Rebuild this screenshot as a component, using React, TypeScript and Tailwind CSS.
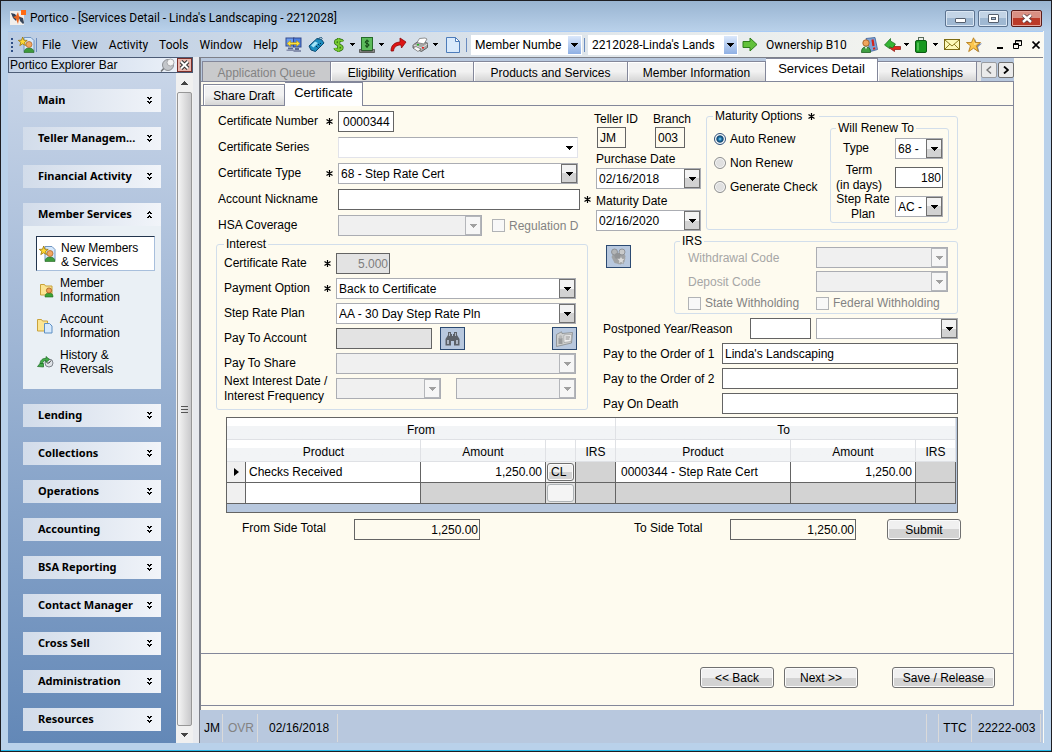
import { useState } from 'react';
import type { ReactNode } from 'react';
import clsx from 'clsx';

const SIDEBAR_TOP = ['Main', 'Teller Managem...', 'Financial Activity'];
const SIDEBAR_BOTTOM = [
  'Lending',
  'Collections',
  'Operations',
  'Accounting',
  'BSA Reporting',
  'Contact Manager',
  'Cross Sell',
  'Administration',
  'Resources',
];

const MAIN_TABS = [
  { label: 'Application Queue', width: 'w-[129px]', disabled: true },
  { label: 'Eligibility Verification', width: 'w-[143px]' },
  { label: 'Products and Services', width: 'w-[154px]' },
  { label: 'Member Information', width: 'w-[138px]' },
  { label: 'Services Detail', width: 'w-[112px]', active: true },
  { label: 'Relationships', width: 'w-[99px]' },
];

/* ---------- small glyphs ---------- */

function Caret({ className }: { className?: string }) {
  return (
    <svg viewBox="0 0 7 4" className={clsx('w-[7px] h-1 shrink-0', className)} fill="currentColor" shapeRendering="crispEdges">
      <path d="M0 0h7v1H0zM1 1h5v1H1zM2 2h3v1H2zM3 3h1v1H3z" />
    </svg>
  );
}

function BarCaret() {
  return (
    <svg viewBox="0 0 5 3" className="w-[5px] h-[3px] shrink-0" shapeRendering="crispEdges">
      <path d="M0 0h5v1H0zM1 1h3v1H1zM2 2h1v1H2z" />
    </svg>
  );
}

function Chevrons({ up }: { up?: boolean }) {
  return (
    <svg viewBox="0 0 5 7" className={clsx('w-[5px] h-[7px] mr-0.5 shrink-0', up && 'rotate-180')} shapeRendering="crispEdges">
      <path d="M0 0h2v1H0zM3 0h2v1H3zM1 1h3v1H1zM2 2h1v1H2zM0 4h2v1H0zM3 4h2v1H3zM1 5h3v1H1zM2 6h1v1H2z" />
    </svg>
  );
}

function Star() {
  return (
    <span className="w-[11px] shrink-0 flex justify-center" aria-label="required">
      <svg viewBox="0 0 7 7" className="size-[7px]" stroke="#000" strokeWidth="1.2">
        <path d="M3.5 0v7M.5 1.5l6 4M6.5 1.5l-6 4" />
      </svg>
    </span>
  );
}

/* ---------- icons ---------- */

function PorticoIcon() {
  return (
    <svg viewBox="0 0 16 16" className="size-4">
      <rect y="1" width="14" height="14" fill="#f1efec" />
      <path d="M1 3l4 1 2 3-1 4-3-3z" fill="#2f3f57" />
      <path d="M8 2l1 4 3 2-3 1-1 5-2-5-3-2 3-1z" fill="#e8641f" />
      <path d="M9 7l4 1 1 5-1 1-3-3z" fill="#38475c" />
      <rect x="11" width="5" height="5" fill="#ff6a13" />
    </svg>
  );
}

function PersonPageIcon() {
  return (
    <svg viewBox="0 0 17 17" className="size-[17px]">
      <path d="M6 1.5h7l3 3v11H6z" fill="#d6e8fb" stroke="#6f95c2" />
      <path d="M6 16.500c0-3 2-4.500 5-4.500s5 1.500 5 4.500z" fill="#3e9a3b" stroke="#22641f" strokeWidth=".6" />
      <circle cx="11" cy="8.500" r="3" fill="#f2a661" stroke="#a95e1f" strokeWidth=".7" />
      <path d="M4.700 1l1.200 3.200 3.300.2-2.600 2 .9 3.200-2.800-1.800-2.900 1.800 1-3.200L.3 4.400l3.200-.2z" fill="#ffd934" stroke="#9a7407" strokeWidth=".8" />
    </svg>
  );
}

function FolderPersonIcon() {
  return (
    <svg viewBox="0 0 16 16" className="size-4">
      <path d="M1.500 2.500h4l1 1.500h6.500v9h-11.500z" fill="#fbe592" stroke="#c9a23a" />
      <path d="M6 15c0-3 1.500-4 4-4s4 1 4 4z" fill="#3aa336" stroke="#1f6a1d" strokeWidth=".6" />
      <circle cx="10" cy="8.500" r="2.600" fill="#ee9f57" stroke="#9a4f17" strokeWidth=".7" />
    </svg>
  );
}

function FolderPageIcon() {
  return (
    <svg viewBox="0 0 16 16" className="size-4">
      <path d="M.5 1.500h4l1 1.500h5v10h-10z" fill="#fbe592" stroke="#c9a23a" />
      <path d="M7.500 5.500h5l2.500 2.500v7h-7.500z" fill="#d7eafc" stroke="#5d8fc4" />
    </svg>
  );
}

function HistoryIcon() {
  return (
    <svg viewBox="0 0 17 14" className="w-[17px] h-[14px]">
      <circle cx="12" cy="8" r="4" fill="#dfe3e8" stroke="#7f858c" />
      <path d="M12 8l2-2.500M12 8h-2" stroke="#444" fill="none" />
      <path d="M3 9c0-4 3-6 6-5.500V1.500l3.500 3-3.500 3v-2C7 5.500 5.500 7 5.500 9z" fill="#43ab48" stroke="#1d6a22" strokeWidth=".7" />
      <path d="M.5 11.500L3 8.500h3.500V12z" fill="#43ab48" stroke="#1d6a22" strokeWidth=".7" />
    </svg>
  );
}

function ScreensIcon() {
  return (
    <svg viewBox="0 0 17 16" className="w-[17px] h-4">
      <rect x="1" y="1" width="8" height="8" fill="#6b9cf0" stroke="#354a8c" />
      <rect x="8.500" y="1" width="7.500" height="9" fill="#4c7fe0" stroke="#354a8c" />
      <path d="M3 10.500h5v2H3z" fill="#5c6b90" />
      <path d="M1.500 12.500h8v1.500h-8z" fill="#8690ad" />
      <path d="M10 11h4v2h-4z" fill="#5c6b90" />
      <path d="M8.500 13h7.500v2H8.500z" fill="#8690ad" />
      <path d="M2 6.500l3.500-3v2h6v-2l3.500 3-3.500 3v-2h-6v2z" fill="#ffe23a" stroke="#a88500" strokeWidth=".5" />
    </svg>
  );
}

function PhoneIcon() {
  return (
    <svg viewBox="0 0 17 16" className="w-[17px] h-4">
      <path d="M1 9l8-7.500 4.500 1 2.500 3.500-8.500 8.500-4.500-1.500z" fill="#1c8dbf" stroke="#0b4a72" />
      <path d="M3 8.500l4-4 3 1.500-4.500 4.500z" fill="#a4e4f7" />
      <path d="M8 9l1 1M10 7l1 1M9.500 10.500l1 1M12 6l1 1M11.500 8.500l1 1" stroke="#062f4d" />
      <path d="M10 2.500l2.500-2.500 2 1.500" stroke="#0b4a72" fill="none" />
    </svg>
  );
}

function DollarIcon() {
  return (
    <svg viewBox="0 0 11 16" className="w-[11px] h-4" fill="none">
      <path d="M9.500 4.500c-.5-1.800-7-2.300-7 .7 0 2.800 6.500 2.500 6.500 5.500s-6.500 2.600-7 .3M5.700 1v14" stroke="#2c6c12" strokeWidth="3.200" />
      <path d="M9.500 4.500c-.5-1.800-7-2.300-7 .7 0 2.800 6.500 2.500 6.500 5.500s-6.500 2.600-7 .3M5.700 1.300v13.400" stroke="#79cc32" strokeWidth="1.800" />
    </svg>
  );
}

function CashIcon() {
  return (
    <svg viewBox="0 0 16 16" className="size-4">
      <rect x="2.500" y=".5" width="11" height="13" fill="#5cbb5b" stroke="#256b2a" />
      <path d="M10 4.500c-.8-1-3.800-1-3.800.7 0 1.800 3.800.8 3.800 2.800 0 1.800-3.200 1.700-4 .5M8 2.500v8.500" stroke="#0d3d10" fill="none" />
      <path d="M.5 12.500h2v1.500h11v-1.500h2v3H.5z" fill="#8a8a86" stroke="#3e3e3c" strokeWidth=".7" />
    </svg>
  );
}

function RedArrowIcon() {
  return (
    <svg viewBox="0 0 17 16" className="w-[17px] h-4">
      <path d="M1 14c0-5.500 3-8.500 9-9V1l6 4-4.500 6-.5-3c-4 0-7 1.500-7.500 6z" fill="#dd1414" stroke="#8e0808" strokeWidth=".8" />
    </svg>
  );
}

function PrinterIcon() {
  return (
    <svg viewBox="0 0 17 16" className="w-[17px] h-4">
      <path d="M1 8l5-3.500 9.500 1.500v4.500l-6 4-8.500-3.500z" fill="#a9a9a7" stroke="#4a4a4a" strokeWidth=".8" />
      <path d="M7.500 1.500l5.500-.5 2 1-3 5-7-1.500z" fill="#fff" stroke="#777" strokeWidth=".8" />
      <path d="M1.500 8l8 3 6-4" fill="none" stroke="#e4e4e4" />
      <path d="M1 11l3-1.500 5 2.500-3 2.500z" fill="#fafafa" stroke="#555" strokeWidth=".6" />
      <path d="M10 10h2v1.500h-2z" fill="#e22" />
      <path d="M5 7h2v1.500H5z" fill="#2b2" />
    </svg>
  );
}

function PageIcon() {
  return (
    <svg viewBox="0 0 14 16" className="w-[14px] h-4">
      <path d="M.5.5h9l4 4v11H.5z" fill="#d9eafc" stroke="#4d7cba" />
      <path d="M9.500.5v4h4z" fill="#fff" stroke="#4d7cba" />
    </svg>
  );
}

function GoIcon() {
  return (
    <svg viewBox="0 0 16 15" className="w-4 h-[15px]">
      <path d="M1 4.500h7V1l7 6.500L8 14v-3.500H1z" fill="#62c13a" stroke="#2f7d1b" />
    </svg>
  );
}

function PeopleIcon() {
  return (
    <svg viewBox="0 0 17 16" className="w-[17px] h-4">
      <path d="M5 1.500l9-1 2.500 12-7 2z" fill="#7fa3d6" stroke="#3c5f96" strokeWidth=".8" />
      <path d="M11.500 2.500l1 6.500M13 10.500l.3 2" stroke="#d3241c" strokeWidth="2.200" />
      <circle cx="5" cy="6" r="3.200" fill="#f0a55c" stroke="#9c5519" strokeWidth=".8" />
      <path d="M.5 15.500c0-4 1.500-5.500 4.500-5.500s4.500 1.500 4.500 5.500z" fill="#3f9f42" stroke="#1f5f22" strokeWidth=".8" />
      <path d="M4 10l1 2.500L6 10z" fill="#fff" />
    </svg>
  );
}

function SwapIcon() {
  return (
    <svg viewBox="0 0 17 14" className="w-[17px] h-[14px]">
      <path d="M16.500 8.500h-6v-2l-5 3.500 5 3.500v-2h6z" fill="#e02a1e" stroke="#8d130b" strokeWidth=".7" />
      <path d="M.5 7l6-6.500v2.500l5 3-3 4-3-1.500v2z" fill="#35b534" stroke="#17691a" strokeWidth=".7" />
    </svg>
  );
}

function BagIcon() {
  return (
    <svg viewBox="0 0 12 16" className="w-3 h-4">
      <rect x="3.500" y=".5" width="5" height="3.500" fill="#e9efe9" stroke="#5a6b5a" />
      <rect x=".5" y="3.500" width="11" height="12" rx="1.500" fill="#17981f" stroke="#0b5a12" />
      <path d="M2 5.500h2v8H2z" fill="#4cc04f" />
    </svg>
  );
}

function MailIcon() {
  return (
    <svg viewBox="0 0 16 11" className="w-4 h-[11px]">
      <rect x=".5" y=".5" width="15" height="10" fill="#fdf9b8" stroke="#7c6c14" />
      <path d="M1 1l7 6 7-6M1 10l5-5M15 10l-5-5" fill="none" stroke="#8f7f22" />
    </svg>
  );
}

function FavoriteIcon() {
  return (
    <svg viewBox="0 0 16 16" className="size-4">
      <path d="M9 2l2 4.500h5l-4 3.500 1.500 5.500-5-3.500z" fill="#7d8db0" />
      <path d="M7.500.8l2 4.700h5l-4 3.300 1.800 5.700-4.800-3.300-4.800 3.300 1.800-5.700L.5 5.500h5z" fill="#fbc64e" stroke="#b77e1c" strokeWidth=".9" />
      <path d="M7.500 3l1 3.500h3L8.500 8z" fill="#fff3c4" />
    </svg>
  );
}

function BinocularsIcon() {
  return (
    <svg viewBox="0 0 15 14" className="w-[15px] h-[14px]" fill="#5c6168">
      <path d="M3 0h3v2h1v2h1V2h1V0h3v3l2.500 4v6.500H9V9H6v4.500H.5V7L3 3z" />
      <path d="M4 1h1v3H4zM10 1h1v3h-1zM2 8h2v4H2zM11 8h2v4h-2z" fill="#aeb6c2" />
    </svg>
  );
}

function CardIcon() {
  return (
    <svg viewBox="0 0 17 16" className="w-[17px] h-4">
      <path d="M.5 3.500L5.500.8 6 2.500l10.500-1-1 10.500L.5 15.500z" fill="#cfd0cf" stroke="#878a8c" strokeWidth=".8" />
      <rect x="2.500" y="7" width="4" height="6" fill="#9a9c9d" />
      <circle cx="4.500" cy="6" r="1.800" fill="#b7b8b8" />
      <path d="M8 4l7.500-.5-.5 7-7 1z" fill="#efefef" stroke="#919497" strokeWidth=".6" />
      <path d="M9.500 6h4.500M9.500 8h4" stroke="#888" />
    </svg>
  );
}

function GroupIcon() {
  return (
    <svg viewBox="0 0 17 17" className="size-[17px]">
      <path d="M1.500 9l2-4h10l2 3-1 6-4 2.500-6-1.500z" fill="#a1a3a4" />
      <circle cx="4.500" cy="4" r="3" fill="#b3b5b6" stroke="#85888b" strokeWidth=".8" />
      <circle cx="12" cy="4" r="3" fill="#c9caca" stroke="#85888b" strokeWidth=".8" />
      <circle cx="7.500" cy="8" r="3" fill="#929496" />
      <path d="M11 8l1.200 2.500 3 .3-2.200 2 .5 3-2.500-1.500L8.500 16l.5-3.200-2.200-2 3-.3z" fill="#dcdcdb" stroke="#9a9c9e" strokeWidth=".6" />
    </svg>
  );
}

/* ---------- form controls ---------- */

type TextBoxProps = {
  id: string;
  value?: string;
  width: string;
  right?: boolean;
  disabled?: boolean;
  plain?: boolean;
};

function TextBox({ id, value = '', width, right, disabled, plain }: TextBoxProps) {
  return (
    <input
      id={id}
      type="text"
      defaultValue={value}
      disabled={disabled}
      className={clsx(
        'h-[21px] border border-[#646464] text-xs leading-4 rounded-none outline-none shrink-0',
        width,
        right ? 'text-right px-px' : 'px-0.5',
        disabled ? 'bg-[#e3e3e3] text-[#7d7d7d]' : plain ? 'bg-transparent' : 'bg-white',
      )}
    />
  );
}

type ComboProps = {
  id: string;
  value?: string;
  width: string;
  disabled?: boolean;
  flat?: boolean;
  label?: string;
};

function Combo({ id, value = '', width, disabled, flat, label }: ComboProps) {
  return (
    <span className={clsx('relative flex h-[21px] shrink-0', width)}>
      <select
        id={id}
        disabled={disabled}
        aria-label={label}
        className={clsx(
          'appearance-none w-full border text-xs leading-4 pl-0.5 pr-[18px] rounded-none outline-none opacity-100',
          flat ? 'border-[#e2e3ea] border-t-[#abadb3]' : 'border-[#abadb3]',
          disabled ? 'bg-[#f0f0f0]' : 'bg-white',
        )}
      >
        <option>{value}</option>
      </select>
      <span
        className={clsx(
          'absolute right-px top-px bottom-px w-4 flex items-center justify-center pointer-events-none',
          flat && 'text-black',
          !flat && !disabled && 'border border-[#707070] bg-gradient-to-b from-[#f3f3f3] from-50% to-[#d2d2d2] to-50% text-black',
          disabled && 'border border-[#b4b6ba] bg-[#f6f6f6] text-[#a0a0a0]',
        )}
      >
        <Caret />
      </span>
    </span>
  );
}

type FieldProps = {
  id: string;
  label: ReactNode;
  required?: boolean;
  labelWidth: string;
  children: ReactNode;
};

function Field({ id, label, required, labelWidth, children }: FieldProps) {
  return (
    <div className="flex items-center h-[21px]">
      <label htmlFor={id} className={clsx('shrink-0 leading-[15px] whitespace-nowrap', labelWidth)}>
        {label}
      </label>
      {required ? <span className="-ml-[3px] mr-[3px]"><Star /></span> : <span className="w-[11px] shrink-0" />}
      {children}
    </div>
  );
}

function GroupBox({ title, className, children }: { title: ReactNode; className?: string; children: ReactNode }) {
  return (
    <fieldset className={clsx('border border-[#d2deeb] rounded-[3px] min-w-0', className)}>
      <legend className="px-0.5 h-3.5 leading-[14px] flex items-center">{title}</legend>
      {children}
    </fieldset>
  );
}

function Check({ id, label }: { id: string; label: string }) {
  return (
    <span className="flex items-center gap-1 text-[#838383]">
      <input id={id} type="checkbox" disabled className="appearance-none size-[13px] border border-[#b1b3b6] bg-[#f8f8f8] shrink-0" />
      <label htmlFor={id} className="whitespace-nowrap">{label}</label>
    </span>
  );
}

function PushButton({ children, className }: { children: ReactNode; className?: string }) {
  return (
    <button
      type="button"
      className={clsx(
        'border border-[#707070] rounded-[3px] text-xs shadow-[inset_0_0_0_1px_#fbfbfb] bg-gradient-to-b from-[#f0f0f0] from-50% to-[#d3d3d3] to-50%',
        className,
      )}
    >
      {children}
    </button>
  );
}

function ToolButton({ label, children }: { label: string; children: ReactNode }) {
  return (
    <button type="button" aria-label={label} className="w-[25px] h-[23px] border border-[#2c4a72] bg-[#b8c8de] flex items-center justify-center shrink-0">
      {children}
    </button>
  );
}

/* ---------- window chrome ---------- */

function TitleBar() {
  const box = 'h-[17px] border rounded-[2px] bg-gradient-to-b from-50% to-50% flex justify-center';
  const plain = 'w-[30px] border-[#5c7390] shadow-[inset_0_0_0_1px_#dbe7f4] from-[#c3d4e6] to-[#9fb8d2]';
  return (
    <header className="h-[30px] shrink-0 flex items-center px-[9px] pt-1 bg-gradient-to-b from-[#99b4d1] to-[#b9d1ea]">
      <PorticoIcon />
      <h1 className="pl-1 text-xs font-['Roboto',sans-serif] whitespace-nowrap flex-1">
        Portico - [Services Detail - Linda's Landscaping - 2212028]
      </h1>
      <div className="flex gap-[3px]">
        <button type="button" aria-label="Minimize" className={clsx(box, plain, 'items-end pb-[3px]')}>
          <span className="w-[11px] h-[5px] border border-[#555f6e] bg-white rounded-[1px]" />
        </button>
        <button type="button" aria-label="Maximize" className={clsx(box, plain, 'items-center')}>
          <span className="w-[11px] h-[9px] border border-[#555f6e] bg-white rounded-[1px] flex items-center justify-center">
            <span className="w-[5px] h-[3px] border border-[#555f6e] bg-[#a9bfd7]" />
          </span>
        </button>
        <button
          type="button"
          aria-label="Close"
          className={clsx(box, 'w-[31px] items-center border-[#5a1c19] shadow-[inset_0_0_0_1px_#e5a59b] from-[#d98f83] to-[#bb3a28]')}
        >
          <svg viewBox="0 0 12 9" className="w-3 h-[9px]">
            <path d="M2 1l8 7M10 1L2 8" stroke="#5b3a3e" strokeWidth="4" />
            <path d="M2 1l8 7M10 1L2 8" stroke="#fff" strokeWidth="2.4" />
          </svg>
        </button>
      </div>
    </header>
  );
}

function BarSelect({ label, value, width }: { label: string; value: string; width: string }) {
  return (
    <span className={clsx('relative flex h-[20px] shrink-0 bg-white', width)}>
      <select aria-label={label} className="appearance-none w-full pl-1 pr-[18px] text-xs outline-none">
        <option>{value}</option>
      </select>
      <span className="absolute right-px top-px bottom-px w-[13px] bg-gradient-to-b from-[#dbe8fb] to-[#8fb0e4] flex items-center justify-center pointer-events-none">
        <Caret />
      </span>
    </span>
  );
}

function MenuBar() {
  const icon = 'shrink-0 flex items-center';
  return (
    <div className="h-[26px] shrink-0 flex items-center text-xs font-['Roboto',sans-serif] bg-gradient-to-r from-[#bccde3] to-[#fcfaf1] border-t border-[#a9cbf5]">
      <span className="ml-[3px] w-0.5 h-[14px] border-l-2 border-dotted border-[#2f4f86] shrink-0" />
      <span className="ml-[5px] shrink-0"><PersonPageIcon /></span>
      <span className="w-px h-[14px] ml-px bg-[#6a8cc0] shrink-0" />
      <nav className="flex gap-[11px] pl-[5px] w-[248px] shrink-0">
        {['File', 'View', 'Activity', 'Tools', 'Window', 'Help'].map((m) => (
          <button key={m} type="button">{m}</button>
        ))}
      </nav>
      <button type="button" aria-label="Screens" className={icon}><ScreensIcon /></button>
      <button type="button" aria-label="Phone" className={clsx(icon, 'ml-[6px]')}><PhoneIcon /></button>
      <button type="button" aria-label="Money" className={clsx(icon, 'ml-2 gap-[6px]')}><DollarIcon /><BarCaret /></button>
      <button type="button" aria-label="Cash" className={clsx(icon, 'ml-1 gap-1')}><CashIcon /><BarCaret /></button>
      <button type="button" aria-label="Forward" className={clsx(icon, 'ml-[6px]')}><RedArrowIcon /></button>
      <button type="button" aria-label="Print" className={clsx(icon, 'ml-[5px] gap-1')}><PrinterIcon /><BarCaret /></button>
      <button type="button" aria-label="New page" className={clsx(icon, 'ml-2')}><PageIcon /></button>
      <span className="w-px h-[14px] ml-[6px] mr-1 bg-[#6a8cc0] shrink-0" />
      <BarSelect label="Search by" value="Member Numbe" width="w-[111px]" />
      <span className="w-px h-[14px] ml-0.5 mr-[3px] bg-[#6a8cc0] shrink-0" />
      <BarSelect label="Member" value="2212028-Linda's Lands" width="w-[150px]" />
      <button type="button" aria-label="Go" className={clsx(icon, 'ml-1')}><GoIcon /></button>
      <span className="pl-2 w-[103px] shrink-0 whitespace-nowrap">Ownership B10</span>
      <button type="button" aria-label="Members" className={icon}><PeopleIcon /></button>
      <button type="button" aria-label="Transfer" className={clsx(icon, 'ml-[6px] gap-[3px]')}><SwapIcon /><BarCaret /></button>
      <button type="button" aria-label="Bag" className={clsx(icon, 'ml-[6px] gap-[6px]')}><BagIcon /><BarCaret /></button>
      <button type="button" aria-label="Mail" className={clsx(icon, 'ml-[6px]')}><MailIcon /></button>
      <button type="button" aria-label="Favorites" className={clsx(icon, 'ml-[6px]')}><FavoriteIcon /></button>
      <div className="flex-1 flex justify-end items-center gap-[10px] pr-[3px]">
        <button type="button" aria-label="Minimize child" className="w-[6px] h-2 border-b-2 border-black" />
        <button type="button" aria-label="Restore child">
          <svg viewBox="0 0 9 9" className="size-[9px]" fill="none" stroke="#000">
            <path d="M2.500 3V.5h6v5H6M2.500 1h6M.5 3.500h5v5h-5zM.5 4.500h5" />
          </svg>
        </button>
        <button type="button" aria-label="Close child">
          <svg viewBox="0 0 8 8" className="size-2" stroke="#000" strokeWidth="1.6">
            <path d="M.5.5l7 7M7.500.5l-7 7" />
          </svg>
        </button>
      </div>
    </div>
  );
}

/* ---------- explorer bar ---------- */

function GroupHeader({ label, open }: { label: string; open?: boolean }) {
  return (
    <button
      type="button"
      aria-expanded={!!open}
      className="w-full h-[23px] flex items-center justify-between pl-[15px] pr-[7px] bg-gradient-to-r from-[#d2dcea] to-[#f1f4f9] text-[11px] font-bold font-['Noto_Sans',sans-serif]"
    >
      <span>{label}</span>
      <Chevrons up={open} />
    </button>
  );
}

function ExplorerBar() {
  return (
    <aside className="w-[185px] shrink-0 flex flex-col text-xs">
      <div className="h-4 shrink-0 flex items-center border border-[#4c5c76] bg-gradient-to-r from-[#c3d1e5] to-[#eef3fa]">
        <span className="flex-1 pl-px">Portico Explorer Bar</span>
        <svg viewBox="0 0 15 14" className="w-[15px] h-[14px] mr-0.5">
          <path d="M5.500 8.500l-4.500 5" stroke="#6d7073" strokeWidth="1.500" />
          <ellipse cx="8" cy="7" rx="5.500" ry="5.500" fill="#c3c6ca" stroke="#8c8f94" />
          <circle cx="10.500" cy="4.500" r="3.500" fill="#f4f4f4" stroke="#9a9c9f" strokeWidth=".8" />
        </svg>
        <button type="button" aria-label="Close explorer bar" className="w-[15px] h-[14px] border border-[#7b2f2a] bg-[#eab7ae] flex items-center justify-center">
          <svg viewBox="0 0 11 10" className="w-[11px] h-[10px]">
            <path d="M2 1.500l7 7M9 1.500l-7 7" stroke="#333" strokeWidth="4" />
            <path d="M2 1.500l7 7M9 1.500l-7 7" stroke="#fff" strokeWidth="2" />
          </svg>
        </button>
      </div>
      <div className="flex-1 flex">
        <div className="flex-1 flex flex-col gap-[15px] px-[15px] pt-4 pb-3 bg-gradient-to-b from-[#c8d5e8] to-[#6388b7]">
          {SIDEBAR_TOP.map((g) => <GroupHeader key={g} label={g} />)}
          <div>
            <GroupHeader label="Member Services" open />
            <div className="bg-[#eaf0f5] pl-[13px] pr-[6px] pt-[10px] pb-[9px] flex flex-col leading-[14px]">
              <a href="#new" className="flex items-center gap-[5px] pl-0.5 mb-px h-[35px] border border-[#a8bfdc] border-t-[#22344c] border-l-[#22344c] bg-white">
                <PersonPageIcon />
                <span className="pt-0.5">New Members<br />&amp; Services</span>
              </a>
              <a href="#member" className="flex items-center gap-[5px] pl-[3px] h-9"><FolderPersonIcon /><span>Member<br />Information</span></a>
              <a href="#account" className="flex items-center gap-[7px] pl-px h-9"><FolderPageIcon /><span>Account<br />Information</span></a>
              <a href="#history" className="flex items-center gap-[6px] pl-px h-9"><HistoryIcon /><span>History &amp;<br />Reversals</span></a>
            </div>
          </div>
          {SIDEBAR_BOTTOM.map((g) => <GroupHeader key={g} label={g} />)}
        </div>
        <div className="w-[17px] bg-[#f0f0f0] flex flex-col items-center pt-2 pb-1.5 gap-[7px] text-[#444]">
          <Caret className="rotate-180" />
          <div className="flex-1 w-[15px] border border-[#979797] rounded-[2px] bg-gradient-to-r from-[#f5f5f5] to-[#c9c9cb] flex flex-col items-center justify-center gap-0.5">
            <span className="w-[7px] h-px bg-[#555]" />
            <span className="w-[7px] h-px bg-[#555]" />
            <span className="w-[7px] h-px bg-[#555]" />
          </div>
          <Caret />
        </div>
      </div>
    </aside>
  );
}

/* ---------- certificate form ---------- */

function CertificateColumn() {
  return (
    <div className="w-[378px] shrink-0">
      <div className="pl-0.5 flex flex-col gap-[5px]">
        <Field id="cert-number" label="Certificate Number" required labelWidth="w-[109px]">
          <span className="flex [&>input]:pl-1"><TextBox id="cert-number" value="0000344" width="w-14" /></span>
        </Field>
        <Field id="cert-series" label="Certificate Series" labelWidth="w-[109px]">
          <Combo id="cert-series" width="w-60" flat />
        </Field>
        <Field id="cert-type" label="Certificate Type" required labelWidth="w-[109px]">
          <Combo id="cert-type" value="68 - Step Rate Cert" width="w-60" />
        </Field>
        <Field id="nickname" label="Account Nickname" labelWidth="w-[109px]">
          <TextBox id="nickname" width="w-[242px]" />
          <span className="w-0.5" />
          <Star />
        </Field>
        <Field id="hsa" label="HSA Coverage" labelWidth="w-[109px]">
          <Combo id="hsa" width="w-36" disabled />
          <span className="w-[10px]" />
          <Check id="reg-d" label="Regulation D" />
        </Field>
      </div>

      <GroupBox title="Interest" className="w-[372px] mt-px pl-[7px] pt-0.5 pb-[10px]">
        <div className="flex flex-col gap-1">
          <Field id="rate" label="Certificate Rate" required labelWidth="w-[101px]">
            <TextBox id="rate" value="5.000" width="w-[54px]" right disabled />
          </Field>
          <Field id="pay-option" label="Payment Option" required labelWidth="w-[101px]">
            <Combo id="pay-option" value="Back to Certificate" width="w-60" />
          </Field>
          <Field id="step-plan" label="Step Rate Plan" labelWidth="w-[101px]">
            <Combo id="step-plan" value="AA - 30 Day Step Rate Pln" width="w-60" />
          </Field>
          <Field id="pay-account" label="Pay To Account" labelWidth="w-[101px]">
            <TextBox id="pay-account" width="w-24" disabled />
            <span className="flex-1 flex justify-between items-center pl-2 pr-[10px]">
              <ToolButton label="Find account"><BinocularsIcon /></ToolButton>
              <ToolButton label="Account card"><CardIcon /></ToolButton>
            </span>
          </Field>
          <Field id="pay-share" label="Pay To Share" labelWidth="w-[101px]">
            <Combo id="pay-share" width="w-60" disabled />
          </Field>
          <Field id="next-date" label={<>Next Interest Date /<br />Interest Frequency</>} labelWidth="w-[101px]">
            <Combo id="next-date" width="w-[105px]" disabled />
            <span className="w-[15px]" />
            <Combo id="frequency" width="w-[120px]" disabled label="Interest Frequency" />
          </Field>
        </div>
      </GroupBox>
    </div>
  );
}

function MaturityColumn() {
  const [maturity, setMaturity] = useState('Auto Renew');
  return (
    <div className="w-[364px] shrink-0">
      <div className="flex">
        <div className="w-28 pt-px flex flex-col gap-1 shrink-0">
          <div className="flex">
            <div className="w-[59px]">
              <label htmlFor="teller" className="block h-[15px] leading-[14px]">Teller ID</label>
              <span className="flex pl-[3px]"><TextBox id="teller" value="JM" width="w-[29px]" plain /></span>
            </div>
            <div>
              <label htmlFor="branch" className="block h-[15px] leading-[14px]">Branch</label>
              <span className="flex pl-0.5"><TextBox id="branch" value="003" width="w-[30px]" plain /></span>
            </div>
          </div>
          <div className="pl-0.5">
            <label htmlFor="purchase" className="block h-4 leading-[14px]">Purchase Date</label>
            <Combo id="purchase" value="02/16/2018" width="w-[105px]" />
          </div>
          <div className="pl-0.5">
            <label htmlFor="maturity" className="block h-[17px] leading-4">Maturity Date</label>
            <Combo id="maturity" value="02/16/2020" width="w-[105px]" />
          </div>
        </div>

        <GroupBox title={<>Maturity Options <span className="w-1" /><Star /></>} className="w-[252px] h-[121px] -mt-0.5 pl-[6px] pr-2">
          <div className="flex justify-between items-start">
            <div className="flex flex-col gap-2 pt-2">
              {['Auto Renew', 'Non Renew', 'Generate Check'].map((o) => (
                <label key={o} className="flex items-center gap-1 h-4 whitespace-nowrap">
                  <input
                    type="radio"
                    name="maturity"
                    checked={maturity === o}
                    onChange={() => setMaturity(o)}
                    className="appearance-none size-3 ml-px shrink-0 rounded-full border border-[#8e8f8f] bg-[#e0e0e0] shadow-[inset_0_0_0_1px_#fafafa] checked:border-[#31507a] checked:bg-[radial-gradient(circle,#8fe0fb_0,#1b6ea5_25%,#12466f_45%,#e8f1f6_60%)]"
                  />
                  {o}
                </label>
              ))}
            </div>
            <GroupBox title="Will Renew To" className="w-[119px] h-[102px] -mt-0.5 px-[5px]">
              <div className="flex flex-col gap-2 pt-[3px] text-center leading-[15px]">
                <div className="flex items-center h-[21px] justify-between">
                  <label htmlFor="renew-type" className="w-[50px] pr-[10px]">Type</label>
                  <Combo id="renew-type" value="68 -" width="w-12" />
                </div>
                <div className="flex items-center h-[21px] justify-between">
                  <label htmlFor="renew-term" className="w-[50px] pr-1 whitespace-nowrap">Term<br />(in days)</label>
                  <TextBox id="renew-term" value="180" width="w-12" right />
                </div>
                <div className="flex items-center h-[21px] justify-between">
                  <label htmlFor="renew-plan" className="w-[54px] whitespace-nowrap">Step Rate<br />Plan</label>
                  <Combo id="renew-plan" value="AC -" width="w-12" />
                </div>
              </div>
            </GroupBox>
          </div>
        </GroupBox>
      </div>

      <div className="flex justify-between items-start pl-3 mt-[3px]">
        <span className="pt-[11px]"><ToolButton label="Joint owners"><GroupIcon /></ToolButton></span>
        <GroupBox title="IRS" className="w-[284px] h-[80px] pl-[5px] pr-[9px]">
          <div className="pl-2 flex flex-col gap-[3px] text-[#a6a6a6] -mt-px">
            <div className="flex items-center">
              <label htmlFor="withdrawal" className="w-32">Withdrawal Code</label>
              <Combo id="withdrawal" width="w-[132px]" disabled />
            </div>
            <div className="flex items-center">
              <label htmlFor="deposit" className="w-32">Deposit Code</label>
              <Combo id="deposit" width="w-[132px]" disabled />
            </div>
            <div className="flex">
              <span className="w-32"><Check id="state" label="State Withholding" /></span>
              <Check id="federal" label="Federal Withholding" />
            </div>
          </div>
        </GroupBox>
      </div>

      <div className="mt-1 pl-[9px] flex flex-col gap-1">
        <div className="flex items-center">
          <label htmlFor="postponed-year" className="w-[147px]">Postponed Year/Reason</label>
          <TextBox id="postponed-year" width="w-[61px]" />
          <span className="w-[5px]" />
          <Combo id="postponed-reason" width="w-[142px]" label="Postponed reason" />
        </div>
        <div className="flex items-center">
          <label htmlFor="payee-1" className="w-[119px]">Pay to the Order of 1</label>
          <TextBox id="payee-1" value="Linda's Landscaping" width="w-[236px]" />
        </div>
        <div className="flex items-center">
          <label htmlFor="payee-2" className="w-[119px]">Pay to the Order of 2</label>
          <TextBox id="payee-2" width="w-[236px]" />
        </div>
        <div className="flex items-center">
          <label htmlFor="pod" className="w-[119px]">Pay On Death</label>
          <TextBox id="pod" width="w-[236px]" />
        </div>
      </div>
    </div>
  );
}

function TransferTable() {
  const head = 'font-normal h-[22px] p-0 pt-0.5 border-r border-b border-[#dfe1e5] bg-gradient-to-b from-white from-40% to-[#f2f4f6] to-40%';
  const cell = 'h-[21px] border-r border-b border-[#646464] p-0';
  return (
    <div className="ml-[25px] w-[732px] mt-[3px] border border-[#646464] bg-[#b8c8de] pb-2 pr-px">
      <table className="table-fixed w-full border-separate border-spacing-0 leading-4">
        <colgroup>
          <col className="w-[19px]" /><col className="w-[175px]" /><col className="w-[125px]" /><col className="w-[30px]" />
          <col className="w-[40px]" /><col className="w-[175px]" /><col className="w-[125px]" /><col />
        </colgroup>
        <thead>
          <tr>
            <th colSpan={5} className={head}>From</th>
            <th colSpan={3} className={clsx(head, 'pr-1')}>To</th>
          </tr>
          <tr>
            <th colSpan={2} className={head}>Product</th>
            <th className={head}>Amount</th>
            <th className={head} />
            <th className={head}>IRS</th>
            <th className={head}>Product</th>
            <th className={head}>Amount</th>
            <th className={head}>IRS</th>
          </tr>
        </thead>
        <tbody>
          <tr>
            <td className={clsx(cell, 'bg-[#f0f0f0]')}>
              <svg viewBox="0 0 5 8" className="w-[5px] h-2 mx-auto"><path d="M0 0l5 4-5 4z" /></svg>
            </td>
            <td className={clsx(cell, 'bg-white pl-[3px]')}>Checks Received</td>
            <td className={clsx(cell, 'bg-white text-right pr-[3px]')}>1,250.00</td>
            <td className={clsx(cell, 'bg-[#f0f0f0]')}>
              <PushButton className="w-[27px] h-[18px] block mx-auto text-left pl-[3px]">CL</PushButton>
            </td>
            <td className={clsx(cell, 'bg-[#d3d3d3]')} />
            <td className={clsx(cell, 'bg-white pl-[5px]')}>0000344 - Step Rate Cert</td>
            <td className={clsx(cell, 'bg-white text-right pr-[3px]')}>1,250.00</td>
            <td className={clsx(cell, 'bg-[#d3d3d3]')} />
          </tr>
          <tr>
            <td className={clsx(cell, 'bg-[#f0f0f0]')} />
            <td className={clsx(cell, 'bg-white')} />
            <td className={clsx(cell, 'bg-[#d3d3d3]')} />
            <td className={clsx(cell, 'bg-[#e2e2e2]')}>
              <button type="button" aria-label="Clear line" disabled className="w-[27px] h-[18px] block mx-auto border border-[#adb2b5] rounded-[3px] bg-[#f4f4f4]" />
            </td>
            <td className={clsx(cell, 'bg-[#d3d3d3]')} />
            <td className={clsx(cell, 'bg-[#d3d3d3]')} />
            <td className={clsx(cell, 'bg-[#d3d3d3]')} />
            <td className={clsx(cell, 'bg-[#d3d3d3]')} />
          </tr>
        </tbody>
      </table>
    </div>
  );
}

function CertificatePanel() {
  return (
    <form className="flex-1 flex flex-col" onSubmit={(e) => e.preventDefault()}>
      <div className="flex-1 pb-2">
        <div className="flex pl-[15px] pt-[5px]">
          <CertificateColumn />
          <MaturityColumn />
        </div>
        <TransferTable />
        <div className="flex items-center pl-[41px] mt-[6px]">
          <label htmlFor="from-total" className="w-28 pb-1">From Side Total</label>
          <TextBox id="from-total" value="1,250.00" width="w-[126px]" right plain />
          <label htmlFor="to-total" className="w-[250px] pl-[154px] pb-1 whitespace-nowrap">To Side Total</label>
          <TextBox id="to-total" value="1,250.00" width="w-[126px]" right plain />
          <PushButton className="h-[21px] ml-[31px] w-[74px]">Submit</PushButton>
        </div>
      </div>
      <div className="h-[52px] shrink-0 border-t border-[#83879a] flex items-center justify-end pr-[18px] pb-1">
        <PushButton className="h-[21px] w-[74px]">&lt;&lt; Back</PushButton>
        <PushButton className="h-[21px] w-[74px] ml-[10px]">Next &gt;&gt;</PushButton>
        <PushButton className="h-[21px] w-[103px] ml-[34px]">Save / Release</PushButton>
      </div>
    </form>
  );
}

function Workspace() {
  const tab = 'bg-gradient-to-b from-[#f2f2f2] from-50% to-[#d6d6d6] to-100% shadow-[inset_1px_1px_0_#fff]';
  return (
    <main className="flex-1 min-w-0 flex flex-col bg-[#fefbef] border-t border-l-2 border-[#7d8089]">
      <div className="flex-1 flex flex-col mr-[29px] mb-1">
        <div className="h-[23px] shrink-0 flex items-end bg-[#b8c8de] pl-px" role="tablist">
          {MAIN_TABS.map((t) => (
            <button
              key={t.label}
              type="button"
              role="tab"
              aria-selected={!!t.active}
              disabled={t.disabled}
              className={clsx(
                'shrink-0 whitespace-nowrap border-t border-r border-[#83879a]',
                t.width,
                t.active
                  ? 'h-6 -mb-px pb-1 bg-white text-[13px]'
                  : t.disabled
                    ? 'h-5 pt-0.5 bg-[#c9cacc] text-[#838383] border-l'
                    : clsx('h-5 pt-0.5', tab),
              )}
            >
              {t.label}
            </button>
          ))}
          <span className="w-1 h-5 bg-[#e6e6e6] border-t border-[#83879a]" />
          <span className="flex-1" />
          <button type="button" aria-label="Previous tabs" className="w-4 h-4 mb-[3px] shrink-0 border border-[#9a9ca0] rounded-[2px] bg-[#ebebeb] flex items-center justify-center">
            <svg viewBox="0 0 6 8" className="w-1.5 h-2" fill="none" stroke="#777" strokeWidth="1.5"><path d="M5 .5L1 4l4 3.500" /></svg>
          </button>
          <button type="button" aria-label="More tabs" className="w-4 h-4 mb-[3px] ml-px shrink-0 border border-[#707070] rounded-[2px] bg-[#ebebeb] flex items-center justify-center">
            <svg viewBox="0 0 6 8" className="w-1.5 h-2" fill="none" stroke="#000" strokeWidth="1.8"><path d="M1 .5L5 4 1 7.500" /></svg>
          </button>
        </div>
        <div className="flex-1 flex flex-col border border-l-0 border-[#83879a]">
          <div className="h-6 shrink-0 flex items-end pl-0.5 border-b border-[#83879a]" role="tablist">
            <button type="button" role="tab" aria-selected="false" className={clsx('w-[82px] h-[21px] pt-0.5 border border-b-0 border-[#83879a]', tab)}>
              Share Draft
            </button>
            <button type="button" role="tab" aria-selected="true" className="w-[78px] h-6 -mb-px pb-1 border-t border-r border-[#83879a] bg-white text-[13px]">
              Certificate
            </button>
          </div>
          <CertificatePanel />
        </div>
      </div>
    </main>
  );
}

function StatusBar() {
  const sep = 'h-7 flex items-center border-r border-[#dadada]';
  return (
    <footer className="h-[33px] shrink-0 flex items-center pt-0.5 bg-[#b8c8de] border-l border-[#7d8089]">
      <span className={clsx(sep, 'w-[23px] pl-1')}>JM</span>
      <span className={clsx(sep, 'w-[35px] pl-[5px] text-[#838383]')}>OVR</span>
      <span className={clsx(sep, 'w-20 pl-[11px]')}>02/16/2018</span>
      <span className={clsx(sep, 'flex-1')} />
      <span className={clsx(sep, 'w-3')} />
      <span className={clsx(sep, 'w-[33px] justify-center')}>TTC</span>
      <span className={clsx(sep, 'w-[69px] pl-[6px] mr-0.5')}>22222-003</span>
    </footer>
  );
}

export default function App() {
  return (
    <div className="w-full min-h-screen flex flex-col border border-[#1d1d22] bg-[#b9d1ea] text-xs text-black font-['Liberation_Sans',Arial,sans-serif]">
      <TitleBar />
      <div className="flex-1 flex flex-col mx-[7px] mb-[7px] pr-px bg-[#fbfbf5]">
        <MenuBar />
        <div className="flex-1 flex">
          <ExplorerBar />
          <div className="w-[6px] shrink-0 bg-[#e8eaee]" />
          <div className="flex-1 min-w-0 flex flex-col">
            <Workspace />
            <StatusBar />
          </div>
        </div>
      </div>
      <div className="h-px shrink-0 bg-[#25b7e6]" />
    </div>
  );
}
